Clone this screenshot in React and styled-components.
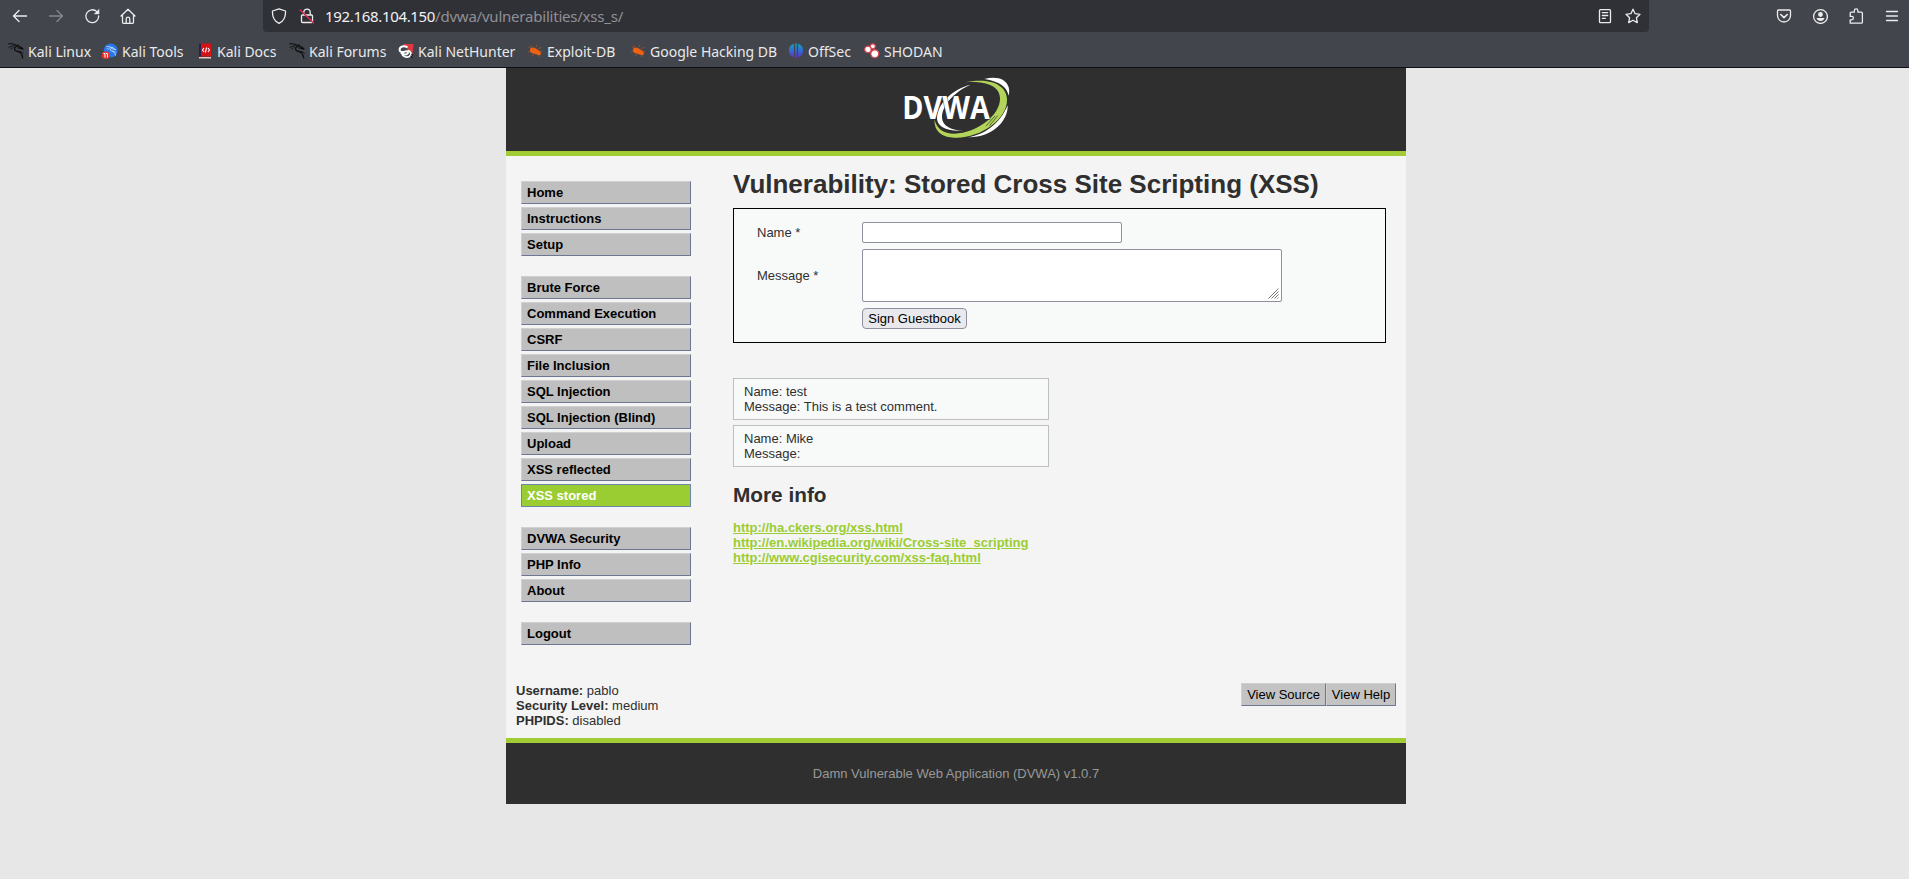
import React from "react";
import styled, { createGlobalStyle } from "styled-components";

const Global = createGlobalStyle`
  * { box-sizing: border-box; }
  body {
    margin: 0;
    background: #e7e7e7;
    color: #2f2f2f;
    font: 13px/15px "Liberation Sans", Arial, sans-serif;
  }
`;

/* ---------- browser chrome ---------- */

const Chrome = styled.header`
  height: 68px;
  background: #42454c;
  border-bottom: 1px solid #111113;
  font-family: "Noto Sans", sans-serif;
  color: #e9e9ea;
`;

const NavBar = styled.div`
  display: flex;
  height: 32px;
  padding: 0 9px 0 12px;
`;

const IconGroup = styled.div`
  display: flex;
  align-items: center;
  gap: 20px;
  flex: ${(p) => (p.$grow ? "1" : "none")};
  justify-content: ${(p) => (p.$grow ? "flex-end" : "flex-start")};
`;

const AddressBar = styled.div`
  display: flex;
  align-items: center;
  width: 1386px;
  height: 32px;
  margin-left: 127px;
  padding: 0 8px;
  background: #303136;
  border-radius: 0 0 4px 4px;
`;

const Url = styled.div`
  flex: 1;
  margin-left: 10px;
  font-size: 15px;
  line-height: 20px;
  letter-spacing: -0.33px;
  color: #f2f2f4;
`;

const UrlPath = styled.span`
  color: #8f9095;
  letter-spacing: -0.22px;
`;

const Icon = styled.svg`
  display: block;
  flex: none;
  width: 16px;
  height: 16px;
  margin-left: ${(p) => p.$ml || 0}px;
  fill: none;
  stroke: ${(p) => (p.$dim ? "#85878c" : "#ececee")};
  stroke-width: 1.3;
  stroke-linecap: round;
  stroke-linejoin: round;
`;

const BookmarkBar = styled.nav`
  display: flex;
  align-items: center;
  height: 35px;
  padding: 3px 0 0 8px;
`;

const Bookmark = styled.a`
  display: flex;
  align-items: center;
  gap: 4px;
  width: ${(p) => p.$w}px;
  white-space: nowrap;
  font-size: 14px;
  line-height: 18px;
`;

const BookmarkLabel = styled.span`
  padding-top: 2px;
`;

const Favicon = styled.svg`
  flex: none;
  width: 16px;
  height: 16px;
`;

/* ---------- page ---------- */

const Container = styled.div`
  width: 900px;
  margin: 0 auto 0 506px;
  background: #f4f4f4;
`;

const Header = styled.div`
  display: flex;
  justify-content: center;
  height: 88px;
  background: #2f2f2f;
  border-bottom: 5px solid #a1cc33;
`;

const Logo = styled.svg`
  width: 160px;
  height: 83px;
`;

const Main = styled.div`
  display: flex;
  height: 527px;
  padding: 0 20px 0 15px;
`;

const Menu = styled.nav`
  display: flex;
  flex-direction: column;
  gap: 20px;
  width: 170px;
  margin-right: 42px;
  padding-top: 25px;
`;

const MenuGroup = styled.div`
  display: flex;
  flex-direction: column;
  gap: 3px;
`;

const MenuItem = styled.a`
  height: 23px;
  padding: 3px 5px;
  border: 1px solid;
  border-color: ${(p) => (p.$on ? "#6b87ab" : "#d0d0d0 #6c7893 #6c7893 #d0d0d0")};
  background: ${(p) => (p.$on ? "#9acd32" : "#bfbfbf")};
  color: ${(p) => (p.$on ? "#fff" : "#000")};
  font-weight: bold;
`;

const Content = styled.main`
  flex: 1;
`;

const Title = styled.h1`
  margin: 13px 0 9px;
  font-size: 26px;
  line-height: 30px;
`;

const Form = styled.form`
  display: grid;
  grid-template-columns: 105px 1fr;
  grid-template-rows: 21px 53px 21px;
  row-gap: 6px;
  align-items: center;
  padding: 13px 23px;
  border: 1px solid #000;
  background: #f8fafa;
`;

const Input = styled.input`
  width: 260px;
  height: 21px;
  border: 1px solid #8f8f9d;
  border-radius: 2px;
  background: #fff;
`;

const AreaWrap = styled.div`
  display: flex;
  align-items: flex-end;
  justify-content: flex-end;
  width: 420px;
  height: 53px;
  padding: 2px;
  border: 1px solid #8f8f9d;
  border-radius: 2px;
  background: #fff;
`;

const Grip = styled.svg`
  width: 11px;
  height: 11px;
`;

const SignButton = styled.button`
  grid-column: 2;
  width: 105px;
  height: 21px;
  padding: 0;
  border: 1px solid #8f8f9d;
  border-radius: 4px;
  background: #e9e9ed;
  color: #000;
  font: 13px/15px "Liberation Sans", Arial, sans-serif;
`;

const Comments = styled.div`
  display: flex;
  flex-direction: column;
  gap: 5px;
  margin-top: 35px;
`;

const Comment = styled.div`
  width: 316px;
  height: 42px;
  padding: 5px 10px;
  border: 1px solid #bfbfbf;
  background: #f8fafa;
`;

const SubTitle = styled.h2`
  margin: 16px 0 14px;
  font-size: 20.8px;
  line-height: 23px;
`;

const InfoLink = styled.a`
  display: block;
  width: max-content;
  color: #9acd32;
  font-weight: bold;
  text-decoration: underline;
`;

const SystemInfo = styled.div`
  display: flex;
  justify-content: space-between;
  align-items: flex-start;
  height: 55px;
  padding: 0 10px;
`;

const ViewButtons = styled.div`
  display: flex;
`;

const ViewButton = styled.button`
  width: ${(p) => p.$w}px;
  height: 23px;
  padding: 0;
  border: 1px solid;
  border-color: #d0d0d0 #6c7893 #6c7893 #d0d0d0;
  background: #c3c3c3;
  color: #000;
  font: 13px/15px "Liberation Sans", Arial, sans-serif;
`;

const Footer = styled.footer`
  height: 66px;
  padding-top: 23px;
  border-top: 5px solid #a1cc33;
  background: #2f2f2f;
  color: #999;
  text-align: center;
`;

/* ---------- favicons ---------- */

const Dragon = ({ c = "#0b0b0c" }) => (
  <g fill="none" stroke={c} strokeLinecap="round" strokeLinejoin="round">
    <path d="M.3.9 4 .7 7.500 1.700l2.700 1.300" strokeWidth=".9" />
    <path d="M1 4.400 5 2.700l4 .3" strokeWidth=".8" />
    <path d="m2.400 6.200 3-1.800" strokeWidth=".6" />
    <path d="m9.800 2 1.400 1.500 2.300.9 1.500 1.700-3-.8-2.200-.6" strokeWidth="1.100" />
    <path d="M8.500 3.300C5.900 4.800 5.800 7.600 8.600 8.100c3.600.6 5 2 6.200 6.900" strokeWidth="1.200" />
    <path d="M10.200 8.400c2 0 3.600.5 5.200 1.800" strokeWidth=".8" />
  </g>
);

const Bug = () => (
  <g stroke="#c65a19" strokeWidth=".6" fill="none">
    <path d="M4 5 1.500 4M4 8 1 9.500M7 11l-2 2M9 4l1-2.500M11 6l3.500-2M13 8l2.500 1M4.500 4 4 2M11.500 12l.5 2" />
    <path d="M3 6.200c.5-1.800 3.400-2.600 5.800-.8L13 8.200l1 2.200-.8 1.900-2.800-.5-3.600-1.200C4.200 10.200 2.400 8.300 3 6.200z" fill="#ee6112" stroke="none" />
  </g>
);

const favicons = {
  kali: <Dragon />,
  tools: (
    <>
      <circle cx="8.700" cy="7.500" r="7" fill="#2877ea" />
      <g transform="translate(4.300 3) scale(.62)"><Dragon c="#e8f1ff" /></g>
      <rect x="0" y="8.500" width="7.500" height="7.500" rx="3" fill="#e5322d" />
      <path d="M1.500 10.500h1.500v4M4 10.500h1.500v4" stroke="#fff" fill="none" />
    </>
  ),
  docs: (
    <>
      <path d="M2 .5h12v13H2z" fill="#d51317" />
      <path d="M2 .5h2v13H2z" fill="#28224c" />
      <path d="M2 14h12v1.500H2z" fill="#e8c9c9" />
      <path d="M7 5 5.500 7 7 9M11 5l1.500 2L11 9M9.600 4.500 8.400 9.500" stroke="#fff" fill="none" strokeWidth="1.100" />
    </>
  ),
  hunter: (
    <>
      <path d="M5 1h10.500l-1 10z" fill="#e0393f" />
      <path d="M9.500 4.500C6 2.300 1.800 3.500 1.600 6.500c-.1 2.700 3 3 5 2.200 2.800-1.200 4.200.7 2.800 2-1.400 1.400-4.500 1-6.400-1.200" fill="none" stroke="#fff" strokeWidth="2" />
      <path d="M4 11.500c2.500 3.300 6.500 3.500 8.500.8 1.200-2-.5-4.500-3-5" fill="none" stroke="#fff" strokeWidth="1.800" />
      <path d="m12.500 13 2.500 2M13.500 11l1.500 2" stroke="#111" strokeWidth="1" />
    </>
  ),
  bug: <Bug />,
  offsec: (
    <>
      <defs>
        <linearGradient id="os" gradientUnits="userSpaceOnUse" x1="0" y1="0" x2="0" y2="16">
          <stop offset="0" stopColor="#11a7b5" />
          <stop offset=".5" stopColor="#3468d8" />
          <stop offset="1" stopColor="#6b25c4" />
        </linearGradient>
      </defs>
      <path d="M5.900.8v13.400A7 7 0 0 1 5.900.8zM10.100.8v13.400A7 7 0 0 0 10.100.8zM7.200.2h1.600v15.300H7.200z" fill="url(#os)" />
    </>
  ),
  shodan: (
    <g fill="#fff" stroke="#d9434e" strokeWidth="1.200">
      <circle cx="8.800" cy="3.300" r="2.500" />
      <circle cx="3.900" cy="6.400" r="3.200" />
      <circle cx="10.800" cy="10.800" r="4" />
    </g>
  ),
};

const bookmarks = [
  ["kali", "Kali Linux", 94],
  ["tools", "Kali Tools", 95],
  ["docs", "Kali Docs", 92],
  ["kali", "Kali Forums", 109],
  ["hunter", "Kali NetHunter", 129],
  ["bug", "Exploit-DB", 103],
  ["bug", "Google Hacking DB", 158],
  ["offsec", "OffSec", 76],
  ["shodan", "SHODAN", 90],
];

const menu = [
  ["Home", "Instructions", "Setup"],
  ["Brute Force", "Command Execution", "CSRF", "File Inclusion", "SQL Injection", "SQL Injection (Blind)", "Upload", "XSS reflected", "XSS stored"],
  ["DVWA Security", "PHP Info", "About"],
  ["Logout"],
];

const comments = [
  ["test", "This is a test comment."],
  ["Mike", ""],
];

const links = [
  "http://ha.ckers.org/xss.html",
  "http://en.wikipedia.org/wiki/Cross-site_scripting",
  "http://www.cgisecurity.com/xss-faq.html",
];

function BrowserChrome() {
  return (
    <Chrome>
      <NavBar>
        <IconGroup>
          <Icon viewBox="0 0 16 16"><path d="M14.500 8H1.500M7 2.500 1.500 8 7 13.500" /></Icon>
          <Icon viewBox="0 0 16 16" $dim><path d="M1.500 8h13M9 2.500 14.500 8 9 13.500" /></Icon>
          <Icon viewBox="0 0 16 16">
            <path d="M12.800 3.600A6.400 6.400 0 1 0 14.700 8" />
            <path d="M15.100 1.200v4.900h-4.900z" fill="#ececee" strokeWidth=".3" />
          </Icon>
          <Icon viewBox="0 0 16 16">
            <path d="M1 8 8 1.300 15 8M2.500 7v7.300c0 .6.400 1 1 1h9c.6 0 1-.4 1-1V7M6.200 15v-4c0-1 .7-1.800 1.800-1.800S9.800 10 9.800 11v4" />
          </Icon>
        </IconGroup>
        <AddressBar>
          <Icon viewBox="0 0 16 16"><path d="M8 .8 14.500 3c.3 5.500-1.700 10-6.500 12.300C3.200 13 1.200 8.500 1.500 3z" /></Icon>
          <Icon viewBox="0 0 16 16" $ml={12}>
            <path d="M4.800 7V4.300a3.200 3.200 0 0 1 6.400 0V7M3.500 7h9c.6 0 1 .4 1 1v5.500c0 .6-.4 1-1 1h-9c-.6 0-1-.4-1-1V8c0-.6.4-1 1-1z" />
            <path d="m1.200 2 13.300 13" stroke="#e22850" strokeWidth="1.400" />
          </Icon>
          <Url>192.168.104.150<UrlPath>/dvwa/vulnerabilities/xss_s/</UrlPath></Url>
          <Icon viewBox="0 0 16 16">
            <path d="M3.500 1.700h9c.6 0 1 .4 1 1v11c0 .6-.4 1-1 1h-9c-.6 0-1-.4-1-1v-11c0-.6.4-1 1-1zM5.300 4.700h5.400M5.300 7.500h5.400M5.300 10.300h3" />
          </Icon>
          <Icon viewBox="0 0 16 16" $ml={12}>
            <path d="m8 1.200 2.100 4.500 4.900.6-3.600 3.400.9 4.900L8 12.200l-4.300 2.400.9-4.900L1 6.300l4.900-.6z" />
          </Icon>
        </AddressBar>
        <IconGroup $grow>
          <Icon viewBox="0 0 16 16">
            <path d="M2.500 2h11c.6 0 1 .4 1 1v4.500a6.500 6.500 0 0 1-13 0V3c0-.6.4-1 1-1z" />
            <path d="M4.800 6.500 8 9.600l3.200-3.100" strokeWidth="1.600" />
          </Icon>
          <Icon viewBox="0 0 16 16">
            <circle cx="8.500" cy="8.500" r="6.900" />
            <circle cx="8.500" cy="6.500" r="2.400" fill="#ececee" stroke="none" />
            <path d="M4.500 10h8c-.5 2-2 3-4 3s-3.500-1-4-3z" fill="#ececee" stroke="none" />
          </Icon>
          <Icon viewBox="0 0 16 16">
            <path d="M2.200 5.200c0-.6.4-1 1-1h3.100V2.700a1.800 1.800 0 0 1 3.600 0v1.500h3.500c.6 0 1 .4 1 1v9c0 .6-.4 1-1 1H2.200v-3.400h1.500a1.700 1.700 0 0 0 0-3.400H2.200z" />
          </Icon>
          <Icon viewBox="0 0 16 16"><path d="M2.500 3.500h11M2.500 8h11M2.500 12.500h11" /></Icon>
        </IconGroup>
      </NavBar>
      <BookmarkBar>
        {bookmarks.map(([icon, label, w]) => (
          <Bookmark key={label} $w={w}>
            <Favicon viewBox="0 0 16 16">{favicons[icon]}</Favicon>
            <BookmarkLabel>{label}</BookmarkLabel>
          </Bookmark>
        ))}
      </BookmarkBar>
    </Chrome>
  );
}

function DvwaLogo() {
  return (
    <Logo viewBox="0 0 480 249">
      <g transform="translate(12 -12)">
        <path d="M313 45c36-9 65-1 73 25 2 8 2 16 0 25-5-25-27-43-73-50z" fill="#fff" />
        <path d="M383 124c2 47-46 97-119 96 47-7 95-38 119-96z" fill="#fff" />
        <path d="M272 62c-52 12-98 55-101 98-2 28 31 44 80 40-36-1-64-14-65-39-1-38 40-80 86-99z" fill="#fff" />
        <path d="M254 55c70-14 125 3 127 51 2 60-81 118-157 115-37-1-63-20-60-54 6 28 30 43 60 42 67-2 138-56 136-107-1-36-43-52-106-47z" fill="#b2d458" />
        <path d="m318 186 27-30M328 186l25-31" stroke="#2f2f2f" strokeWidth="2" />
        <text x="67" y="166" textLength="262" lengthAdjust="spacingAndGlyphs" fontFamily="Open Sans, sans-serif" fontWeight="700" fontSize="99" fill="#fff" stroke="#2f2f2f" strokeWidth="3" paintOrder="stroke">DVWA</text>
      </g>
    </Logo>
  );
}

export default function App() {
  return (
    <>
      <Global />
      <BrowserChrome />
      <Container>
        <Header><DvwaLogo /></Header>
        <Main>
          <Menu>
            {menu.map((group) => (
              <MenuGroup key={group[0]}>
                {group.map((item) => (
                  <MenuItem key={item} $on={item === "XSS stored"}>{item}</MenuItem>
                ))}
              </MenuGroup>
            ))}
          </Menu>
          <Content>
            <Title>Vulnerability: Stored Cross Site Scripting (XSS)</Title>
            <Form>
              <label>Name *</label>
              <Input />
              <label>Message *</label>
              <AreaWrap>
                <Grip viewBox="0 0 11 11">
                  <path d="M.5 10.500 10.500.5M3.500 10.500l7-7M6.500 10.500l4-4M9.500 10.500l1-1" stroke="#777" fill="none" />
                </Grip>
              </AreaWrap>
              <SignButton type="button">Sign Guestbook</SignButton>
            </Form>
            <Comments>
              {comments.map(([name, message]) => (
                <Comment key={name}>
                  <div>Name: {name}</div>
                  <div>Message: {message}</div>
                </Comment>
              ))}
            </Comments>
            <SubTitle>More info</SubTitle>
            {links.map((l) => <InfoLink key={l}>{l}</InfoLink>)}
          </Content>
        </Main>
        <SystemInfo>
          <div>
            <div><b>Username:</b> pablo</div>
            <div><b>Security Level:</b> medium</div>
            <div><b>PHPIDS:</b> disabled</div>
          </div>
          <ViewButtons>
            <ViewButton $w={85}>View Source</ViewButton>
            <ViewButton $w={70}>View Help</ViewButton>
          </ViewButtons>
        </SystemInfo>
        <Footer>Damn Vulnerable Web Application (DVWA) v1.0.7</Footer>
      </Container>
    </>
  );
}
